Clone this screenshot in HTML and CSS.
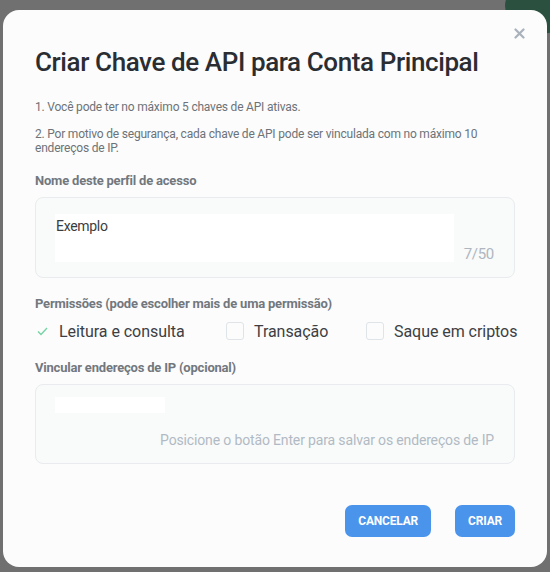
FILE: index.html
```html
<!DOCTYPE html>
<html lang="pt">
<head>
<meta charset="utf-8">
<title>Criar Chave de API</title>
<link rel="stylesheet" href="styles.css">
</head>
<body>
<div class="backdrop-blob"></div>
<div class="modal">
  <button class="close" aria-label="Fechar">
    <svg width="11" height="11" viewBox="0 0 11 11"><path d="M1.5 1.5 L9.5 9.5 M9.5 1.5 L1.5 9.5" stroke="#a9b1bb" stroke-width="2.2" stroke-linecap="round"/></svg>
  </button>
  <h1 class="title">Criar Chave de API para Conta Principal</h1>
  <p class="rule">1. Você pode ter no máximo 5 chaves de API ativas.</p>
  <p class="rule">2. Por motivo de segurança, cada chave de API pode ser vinculada com no máximo 10 endereços de IP.</p>

  <div class="label">Nome deste perfil de acesso</div>
  <div class="field field-name">
    <div class="input-white">Exemplo</div>
    <span class="counter">7/50</span>
  </div>

  <div class="label">Permissões (pode escolher mais de uma permissão)</div>
  <div class="perms">
    <label class="perm">
      <svg class="check" width="11" height="9" viewBox="0 0 11 9"><path d="M1 4.5 L4 7.5 L10 1" fill="none" stroke="#74d3a4" stroke-width="1.3"/></svg>
      <span>Leitura e consulta</span>
    </label>
    <label class="perm">
      <span class="box"></span>
      <span>Transação</span>
    </label>
    <label class="perm">
      <span class="box"></span>
      <span>Saque em criptos</span>
    </label>
  </div>

  <div class="label">Vincular endereços de IP (opcional)</div>
  <div class="field field-ip">
    <div class="ip-white"></div>
    <div class="ip-hint">Posicione o botão Enter para salvar os endereços de IP</div>
  </div>

  <div class="actions">
    <button class="btn">CANCELAR</button>
    <button class="btn">CRIAR</button>
  </div>
</div>
</body>
</html>
```

FILE: styles.css
```css
* { box-sizing: border-box; }
html, body { margin: 0; padding: 0; }
body {
  background: #707070;
  width: 550px;
  height: 572px;
  overflow: hidden;
  padding: 10px 3px 0 3px;
  font-family: Roboto, "Noto Sans", sans-serif;
  position: relative;
}
.backdrop-blob {
  position: absolute;
  top: -22px;
  left: 505px;
  width: 70px;
  height: 56px;
  border-radius: 50%;
  background: #2c5040;
}
.modal {
  position: relative;
  width: 544px;
  height: 557px;
  background: #fcfcfc;
  border-radius: 16px;
  padding: 37px 32px 0 32px;
  display: flex;
  flex-direction: column;
}
.close {
  position: absolute;
  top: 18px;
  right: 22px;
  border: 0;
  background: none;
  padding: 0;
  width: 11px;
  height: 11px;
  display: flex;
}
.title {
  margin: 0;
  font-size: 26px;
  line-height: 30px;
  font-weight: 500;
  color: #2a2e33;
  letter-spacing: -0.4px;
}
.rule {
  margin: 0;
  font-size: 12px;
  line-height: 14px;
  color: #6d7378;
  letter-spacing: -0.2px;
}
.rule:first-of-type { margin-top: 23px; }
.rule + .rule { margin-top: 13px; }
.label {
  font-size: 13px;
  line-height: 16px;
  font-weight: 700;
  color: #72787e;
  letter-spacing: -0.2px;
  margin-top: 18px;
}
.field {
  margin-top: 8px;
  border: 1px solid #e8ecee;
  border-radius: 8px;
  background: #f9fafa;
}
.field-name {
  height: 81px;
  padding: 16px 20px 0 19px;
  display: flex;
  align-items: flex-start;
}
.input-white {
  width: 399px;
  height: 48px;
  background: #ffffff;
  font-size: 14px;
  line-height: 20px;
  color: #3a3d40;
  padding: 2px 0 0 1px;
  letter-spacing: -0.3px;
}
.counter {
  margin-left: auto;
  align-self: flex-end;
  margin-bottom: 14px;
  font-size: 15px;
  color: #aeb6bf;
  letter-spacing: -0.3px;
}
.perms {
  margin-top: 8px;
  height: 22px;
  display: flex;
  align-items: center;
  padding-left: 2px;
  white-space: nowrap;
}
.perm {
  display: flex;
  align-items: center;
  flex-shrink: 0;
  font-size: 16px;
  color: #3c4044;
  letter-spacing: -0.05px;
}
.perm:nth-child(1) { width: 189px; }
.perm:nth-child(2) { width: 140px; }
.check { margin-right: 11px; }
.box {
  width: 18px;
  height: 18px;
  border: 1px solid #dfe4e8;
  border-radius: 3px;
  background: #fcfcfc;
  margin-right: 10px;
}
.field-ip {
  height: 80px;
  padding: 12px 20px 0 19px;
  display: flex;
  flex-direction: column;
}
.ip-white {
  width: 110px;
  height: 16px;
  background: #ffffff;
}
.ip-hint {
  margin-top: 17px;
  align-self: flex-end;
  font-size: 14px;
  line-height: 20px;
  color: #b1bac4;
  letter-spacing: -0.15px;
}
.actions {
  margin-top: 41px;
  display: flex;
  justify-content: flex-end;
  gap: 24px;
}
.btn {
  height: 32px;
  padding: 0 13px;
  border: 0;
  border-radius: 7px;
  background: #4a94eb;
  color: #ffffff;
  font-family: Roboto, "Noto Sans", sans-serif;
  font-weight: 700;
  font-size: 12px;
  letter-spacing: -0.2px;
}
```
